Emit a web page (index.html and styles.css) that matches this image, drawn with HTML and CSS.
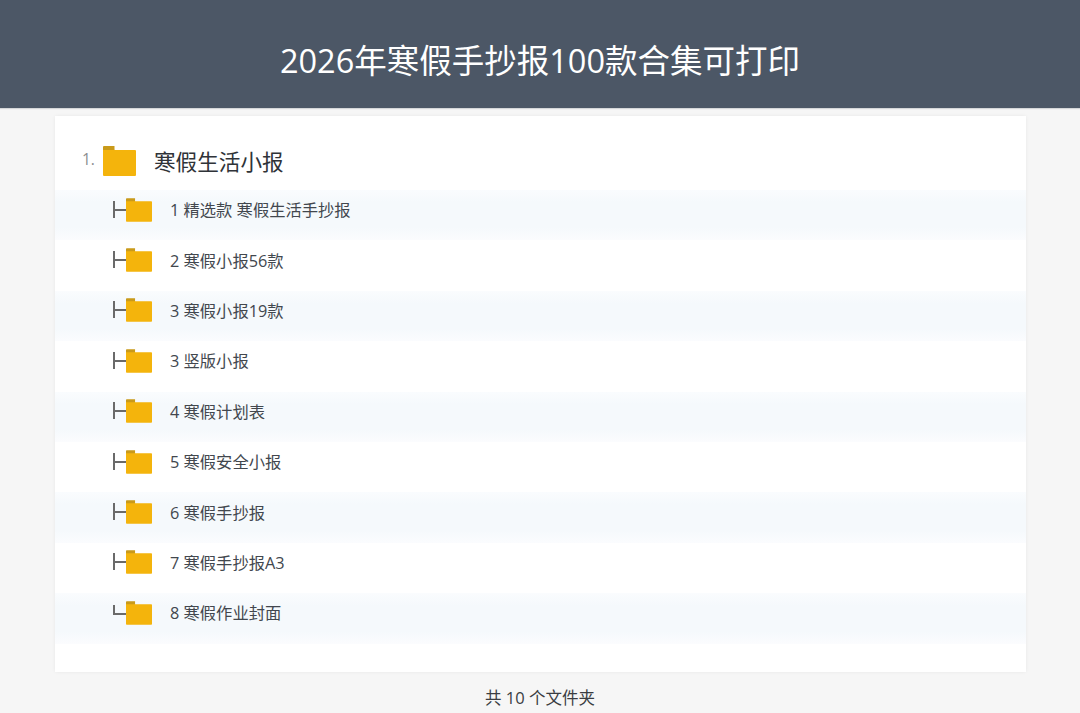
FILE: index.html
```html
<!DOCTYPE html>
<html lang="zh-CN">
<head>
<meta charset="utf-8">
<title>2026年寒假手抄报100款合集可打印</title>
<link rel="stylesheet" href="styles.css">
</head>
<body>
<svg class="defs" width="0" height="0" aria-hidden="true">
  <symbol id="folder" viewBox="0 0 33 30">
    <path d="M1 0h10.5v5H0V1a1 1 0 0 1 1-1z" fill="#c99a1a"/>
    <path d="M0 4h10.5l1-0.5V4H32a1 1 0 0 1 1 1v24a1 1 0 0 1-1 1H1a1 1 0 0 1-1-1z" fill="#f4b40c"/>
  </symbol>
</svg>
<header class="top"><h1>2026年寒假手抄报100款合集可打印</h1></header>
<main class="card">
  <div class="root">
    <span class="num">1.</span>
    <svg class="folder-lg"><use href="#folder"/></svg>
    <span class="root-name">寒假生活小报</span>
  </div>
  <ul class="list">
    <li class="row"><span class="tee"></span><svg class="folder-sm"><use href="#folder"/></svg><span>1 精选款 寒假生活手抄报</span></li>
    <li class="row"><span class="tee"></span><svg class="folder-sm"><use href="#folder"/></svg><span>2 寒假小报56款</span></li>
    <li class="row"><span class="tee"></span><svg class="folder-sm"><use href="#folder"/></svg><span>3 寒假小报19款</span></li>
    <li class="row"><span class="tee"></span><svg class="folder-sm"><use href="#folder"/></svg><span>3 竖版小报</span></li>
    <li class="row"><span class="tee"></span><svg class="folder-sm"><use href="#folder"/></svg><span>4 寒假计划表</span></li>
    <li class="row"><span class="tee"></span><svg class="folder-sm"><use href="#folder"/></svg><span>5 寒假安全小报</span></li>
    <li class="row"><span class="tee"></span><svg class="folder-sm"><use href="#folder"/></svg><span>6 寒假手抄报</span></li>
    <li class="row"><span class="tee"></span><svg class="folder-sm"><use href="#folder"/></svg><span>7 寒假手抄报A3</span></li>
    <li class="row"><span class="tee last"></span><svg class="folder-sm"><use href="#folder"/></svg><span>8 寒假作业封面</span></li>
  </ul>
</main>
<footer class="foot">共 10 个文件夹</footer>
</body>
</html>
```
FILE: styles.css
```css
* { box-sizing: border-box; }
html, body { margin: 0; padding: 0; }
body {
  height: 713px;
  overflow: hidden;
  background: #f6f6f6;
  font-family: "Open Sans", "Noto Sans CJK SC", sans-serif;
  color: #42474e;
}
.defs { display: block; height: 0; }
.top {
  height: 108px;
  background: #4c5766;
  display: flex;
  align-items: center;
  justify-content: center;
  padding-top: 14px;
  box-shadow: 0 1px 1px #d4d6d8;
}
.top h1 {
  margin: 0;
  color: #fff;
  font-weight: 400;
  font-size: 32.5px;
  line-height: 44px;
}
.card {
  width: 971px;
  height: 556px;
  margin: 8px 0 0 55px;
  background: #fff;
  box-shadow: 0 0 3px #e8e8e8;
  padding-top: 24px;
}
.root {
  height: 50px;
  display: flex;
  align-items: center;
  padding-left: 27px;
  padding-bottom: 6px;
  color: #2f3338;
}
.num {
  width: 21px;
  font-size: 15.5px;
  color: #8b8d90;
  margin-top: -6px;
}
.folder-lg { width: 33px; height: 30px; margin-right: 18px; margin-top: -2px; }
.root-name { font-size: 21.6px; line-height: 30px; }
.list { list-style: none; margin: 0; padding: 0; }
.row {
  height: 50.4px;
  display: flex;
  align-items: center;
  padding-left: 58px;
  padding-bottom: 12px;
  font-size: 16.3px;
}
.row:nth-child(odd) {
  background: linear-gradient(#fafcfe 0, #f5f9fc 25%, #f5f9fc 75%, #fbfcfe 100%);
}
.tee {
  position: relative;
  width: 13px;
  height: 17px;
  border-left: 2px solid #6a6a6a;
  margin-top: 0;
}
.tee::after {
  content: "";
  position: absolute;
  left: 0;
  top: 8px;
  width: 11px;
  border-top: 2px solid #6a6a6a;
}
.tee.last { height: 10px; margin-top: -5px; }
.tee.last::after { top: auto; bottom: 0; }
.folder-sm { width: 26px; height: 24px; margin-right: 18px; margin-top: 1px; }
.foot {
  text-align: center;
  font-size: 16.5px;
  line-height: 22px;
  margin-top: 15px;
  color: #3a3d42;
}
```
